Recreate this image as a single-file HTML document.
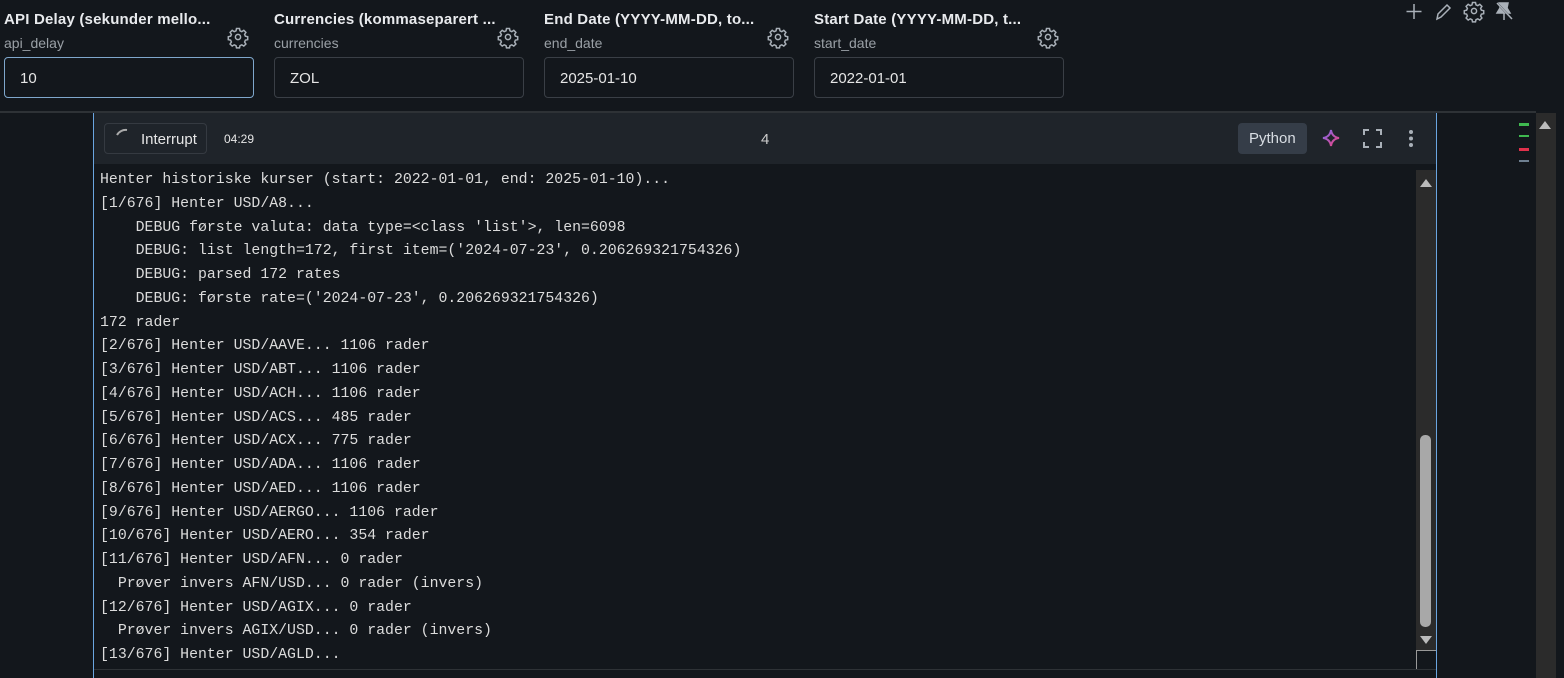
<!DOCTYPE html>
<html><head><meta charset="utf-8"><style>
*{margin:0;padding:0;box-sizing:border-box}
body{width:1564px;height:678px;background:#13171c;font-family:"Liberation Sans",sans-serif;color:#e6e6e6;position:relative;overflow:hidden}
.p{position:absolute;top:0;width:250px}
.p .t{position:absolute;top:11px;left:0;font-size:15px;font-weight:bold;color:#e8eaed;white-space:nowrap;letter-spacing:0.2px}
.p .s{position:absolute;top:35px;left:0;font-size:14px;color:#9aa0a6}
.p .i{position:absolute;top:57px;left:0;width:250px;height:41px;border:1px solid #3a3f46;border-radius:4px;font-size:15px;padding:12px 0 0 15px;color:#e6e6e6}
.top{position:absolute;left:0;top:111px;width:1536px;height:2px;background:#2e3236}
.cell{position:absolute;left:93px;top:113px;width:1344px;height:565px;border-left:1px solid #6aa5e0;border-right:1px solid #6aa5e0}
.hd{position:absolute;left:0;top:0;width:1342px;height:51px;background:#1f242a}
.btn{position:absolute;left:10px;top:10px;width:103px;height:31px;border:1px solid #353a41;border-radius:4px;font-size:15px;padding:7px 0 0 36px;color:#e6e6e6}
.out{position:absolute;left:6px;top:56px;font-family:"Liberation Mono",monospace;font-size:14.85px;line-height:23.75px;color:#dcdcdc;white-space:pre}
.sb{position:absolute;left:1322px;top:57px;width:20px;height:500px;background:#2b2b2b}
</style></head><body>
<div class="p" style="left:4px"><div class="t">API Delay (sekunder mello...</div><div class="s">api_delay</div><div class="i" style="border-color:#7fa7cc">10</div></div>
<div class="p" style="left:274px"><div class="t">Currencies (kommaseparert ...</div><div class="s">currencies</div><div class="i">ZOL</div></div>
<div class="p" style="left:544px"><div class="t">End Date (YYYY-MM-DD, to...</div><div class="s">end_date</div><div class="i">2025-01-10</div></div>
<div class="p" style="left:814px"><div class="t">Start Date (YYYY-MM-DD, t...</div><div class="s">start_date</div><div class="i">2022-01-01</div></div>
<svg width="1564" height="60" style="position:absolute;left:0;top:0" fill="none" stroke="#a9b0b8" stroke-width="1.5">
<defs><g id="gear"><circle cx="0" cy="0" r="2.6"/><path d="M-1.5-8.5h3l.5 2.3 1.8.8 2-1.3 2.1 2.1-1.3 2 .8 1.8 2.3.5v3l-2.3.5-.8 1.8 1.3 2-2.1 2.1-2-1.3-1.8.8-.5 2.3h-3l-.5-2.3-1.8-.8-2 1.3-2.1-2.1 1.3-2-.8-1.8-2.3-.5v-3l2.3-.5.8-1.8-1.3-2 2.1-2.1 2 1.3 1.8-.8z"/></g></defs>
<use href="#gear" x="238" y="37"/><use href="#gear" x="508" y="37"/><use href="#gear" x="778" y="37"/><use href="#gear" x="1048" y="37"/>
<path d="M1414 4v15M1406.5 11.5h15"/>
<path d="M1437 19l1-5 9-9 3 3-9 9z"/>
<use href="#gear" x="1474" y="11"/>
<path d="M1499 3h9l-1 5 3 5h-13l3-5zM1504 13v7" fill="#a9b0b8"/><path d="M1497 3l15 16" stroke="#13171c" stroke-width="2"/><path d="M1497 3l15 16"/>
</svg>
<div class="top"></div>
<div style="position:absolute;left:1536px;top:113px;width:20px;height:565px;background:#2b2b2b"></div>
<svg width="40" height="60" style="position:absolute;left:1515px;top:115px"><rect x="4" y="8" width="10" height="3" fill="#3fb950"/><rect x="4" y="20" width="10" height="2" fill="#3fb950"/><rect x="4" y="33" width="10" height="3" fill="#e0314b"/><rect x="4" y="45" width="10" height="2" fill="#6e7f90"/><path d="M24 14l6-8 6 8z" fill="#bbb"/></svg>
<div class="cell">
<div class="hd">
<div class="btn">Interrupt</div>
<svg width="30" height="20" style="position:absolute;left:20px;top:14px"><path d="M3 8a10 10 0 0 1 10-5" stroke="#aaa" stroke-width="2" fill="none"/></svg>
<div style="position:absolute;left:130px;top:19px;font-size:12px;color:#e6e6e6">04:29</div>
<div style="position:absolute;left:667px;top:18px;font-size:15px;color:#ccc">4</div>
<div style="position:absolute;left:1144px;top:10px;width:69px;height:31px;background:#353d48;border-radius:4px;font-size:15px;color:#d8dde3;padding:7px 0 0 11px">Python</div>
<svg width="120" height="40" style="position:absolute;left:1220px;top:6px"><defs><linearGradient id="gr" x1="0" y1="0" x2="1" y2="1"><stop offset="0" stop-color="#7c6cf0"/><stop offset="1" stop-color="#f0407a"/></linearGradient></defs><path d="M17 11q1 7 8 8q-7 1-8 8q-1-7-8-8q7-1 8-8z" stroke="url(#gr)" stroke-width="2" fill="none"/><path d="M50 16v-5h5M62 11h5v5M67 23v5h-5M55 28h-5v-5" stroke="#a9b0b8" stroke-width="2" fill="none"/><circle cx="97" cy="13" r="2" fill="#a9b0b8"/><circle cx="97" cy="19.5" r="2" fill="#a9b0b8"/><circle cx="97" cy="26" r="2" fill="#a9b0b8"/></svg>
</div>
<div class="out">Henter historiske kurser (start: 2022-01-01, end: 2025-01-10)...
[1/676] Henter USD/A8...
    DEBUG første valuta: data type=&lt;class 'list'&gt;, len=6098
    DEBUG: list length=172, first item=('2024-07-23', 0.206269321754326)
    DEBUG: parsed 172 rates
    DEBUG: første rate=('2024-07-23', 0.206269321754326)
172 rader
[2/676] Henter USD/AAVE... 1106 rader
[3/676] Henter USD/ABT... 1106 rader
[4/676] Henter USD/ACH... 1106 rader
[5/676] Henter USD/ACS... 485 rader
[6/676] Henter USD/ACX... 775 rader
[7/676] Henter USD/ADA... 1106 rader
[8/676] Henter USD/AED... 1106 rader
[9/676] Henter USD/AERGO... 1106 rader
[10/676] Henter USD/AERO... 354 rader
[11/676] Henter USD/AFN... 0 rader
  Prøver invers AFN/USD... 0 rader (invers)
[12/676] Henter USD/AGIX... 0 rader
  Prøver invers AGIX/USD... 0 rader (invers)
[13/676] Henter USD/AGLD...</div>
<div class="sb"><svg width="20" height="500" style="position:absolute;left:0;top:0"><path d="M4 17l6-8 6 8z" fill="#bbb"/><rect x="4" y="265" width="11" height="192" rx="5" fill="#a8a8a8"/><path d="M4 466l6 8 6-8z" fill="#bbb"/></svg></div>
<div style="position:absolute;left:1322px;top:537px;width:20px;height:20px;border:1px solid #999;border-right:none;border-bottom:none;background:#13171c"></div>
<div style="position:absolute;left:0;top:556px;width:1342px;height:1px;background:#2e3236"></div>
</div>
</body></html>
